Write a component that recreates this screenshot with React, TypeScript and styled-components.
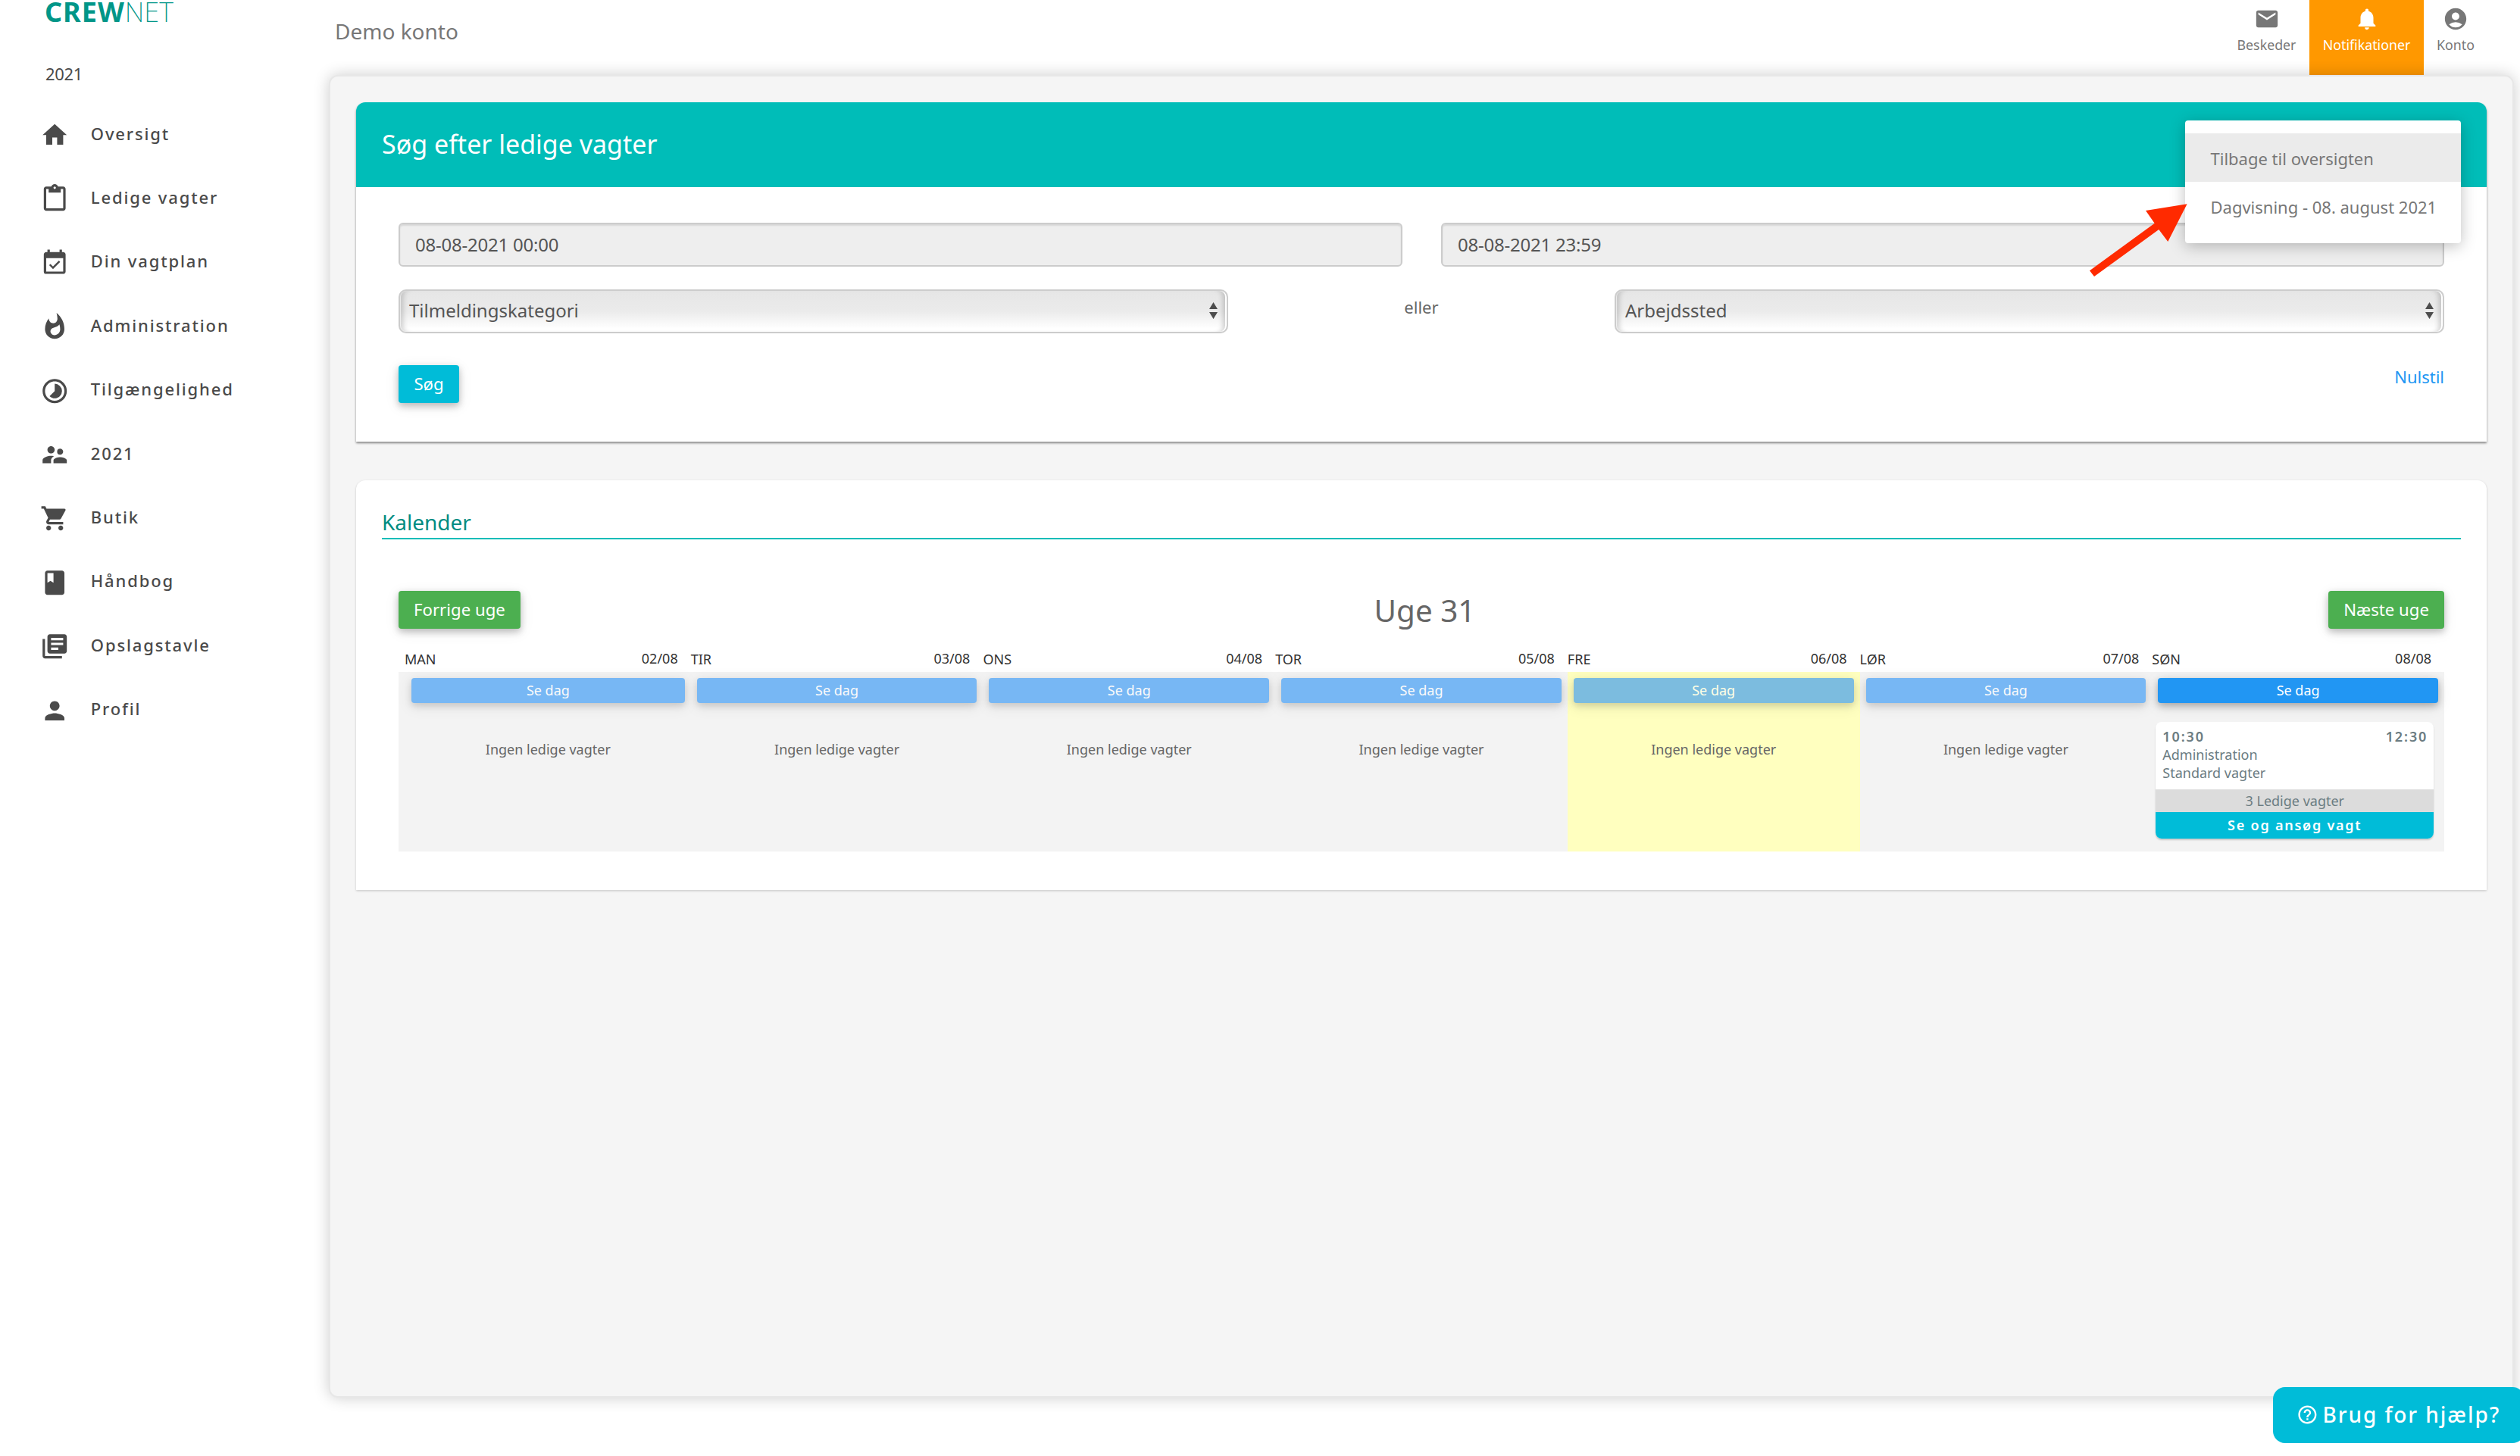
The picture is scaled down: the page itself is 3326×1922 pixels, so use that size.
import React from "react";
import styled, { createGlobalStyle } from "styled-components";
import {
  MdAccountCircle,
  MdBook,
  MdContentPaste,
  MdEmail,
  MdEventAvailable,
  MdHelpOutline,
  MdHome,
  MdLibraryBooks,
  MdNotifications,
  MdPerson,
  MdShoppingCart,
  MdSupervisorAccount,
  MdTimelapse,
  MdWhatshot,
} from "react-icons/md";

const GlobalStyle = createGlobalStyle`
  *, *::before, *::after { box-sizing: border-box; }
  html, body { margin: 0; background: #fff; overflow: hidden; }
  body { font-family: "Noto Sans", "Open Sans", sans-serif; font-size: 22px; color: #666; }
  button { font-family: inherit; border: 0; cursor: pointer; }
`;

const Page = styled.div`
  display: flex;
  width: 3326px;
  height: 1922px;
  position: relative;
  overflow: hidden;
`;

/* Sidebar */
const Sidebar = styled.nav`
  width: 434px;
  flex: none;
  display: flex;
  flex-direction: column;
`;

const Logo = styled.div`
  height: 46px;
  padding-left: 59px;
  font-size: 36px;
  line-height: 32px;
  color: #009688;
  white-space: nowrap;
`;

const LogoStrong = styled.span`
  font-weight: 700;
  letter-spacing: 1px;
`;

const LogoThin = styled.span`
  font-weight: 200;
  letter-spacing: 0;
`;

const Season = styled.div`
  margin-top: 35px;
  padding-left: 60px;
  font-size: 22px;
  letter-spacing: -0.3px;
  line-height: 32px;
  color: #4a4a4a;
`;

const Menu = styled.ul`
  list-style: none;
  margin: 23px 0 0;
  padding: 0;
`;

const MenuItem = styled.li`
  display: flex;
  align-items: center;
  height: 84.4px;
  padding-left: 52.8px;
  gap: 28.6px;
  color: #4a4a4a;
  font-weight: 500;
  letter-spacing: 1.86px;
  font-size: 22px;
  line-height: 30px;

  svg {
    width: 38.4px;
    height: 38.4px;
    flex: none;
  }
  span {
    padding-bottom: 5px;
  }
`;

/* Top bar */
const Main = styled.div`
  flex: 1;
  display: flex;
  flex-direction: column;
  padding-right: 8px;
`;

const TopBar = styled.header`
  height: 99px;
  display: flex;
  justify-content: space-between;
  padding: 0 35px 0 8px;
  color: #777;
`;

const Account = styled.div`
  font-size: 28px;
  line-height: 82px;
`;

const TopActions = styled.div`
  display: flex;
`;

const TopAction = styled.a<{ $active?: boolean; $width: number }>`
  width: ${(p) => p.$width}px;
  height: 99px;
  display: flex;
  flex-direction: column;
  align-items: center;
  padding-top: 8px;
  font-size: 17.8px;
  line-height: 24px;
  gap: 5px;
  color: ${(p) => (p.$active ? "#fff" : "#777")};
  background: ${(p) => (p.$active ? "#ff9800" : "transparent")};

  svg {
    width: 34px;
    height: 34px;
  }
`;

/* Content */
const Panel = styled.main`
  height: 1746px;
  border: 2px solid #e7e7e7;
  border-radius: 12px;
  background: #f5f5f5;
  background-clip: padding-box;
  box-shadow: 0 0 20px rgba(0, 0, 0, 0.2);
  padding: 34px;
  position: relative;
`;

const Card = styled.section<{ $height: number; $shadow: string }>`
  height: ${(p) => p.$height}px;
  background: #fff;
  border-radius: 12px 12px 0 0;
  box-shadow: ${(p) => p.$shadow};
  margin-bottom: 51px;
  position: relative;
`;

const CardHeader = styled.div`
  height: 112px;
  border-radius: 12px 12px 0 0;
  background: #00bdb8;
  color: #fff;
  padding-left: 34px;
  font-size: 34px;
  line-height: 110px;
`;

const Form = styled.div`
  padding: 47px 56px 0;
`;

const DateRow = styled.div`
  display: grid;
  grid-template-columns: 1325px 1324px;
  justify-content: space-between;
`;

const DateInput = styled.div`
  height: 58px;
  border: 2px solid #ccc;
  border-radius: 6px;
  background: #eee;
  box-shadow: inset 0 2px 2px rgba(0, 0, 0, 0.1);
  padding-left: 20px;
  font-size: 24px;
  letter-spacing: -0.23px;
  line-height: 53px;
  color: #555;
`;

const SelectRow = styled.div`
  display: grid;
  grid-template-columns: 1095px 1fr 1095px;
  margin-top: 30px;
`;

const Select = styled.div`
  height: 58px;
  border: 2px solid #ccc;
  border-radius: 10px;
  background: linear-gradient(#e6e6e6, #ebebeb 50%, #fff 92%);
  box-shadow: inset 1px 0 1px rgba(255, 255, 255, 0.7), inset -2px 0 0 #fff,
    inset 9px 0 7px -5px rgba(0, 0, 0, 0.18), inset -10px 0 7px -5px rgba(0, 0, 0, 0.18);
  padding: 0 12px 2px;
  display: flex;
  align-items: center;
  justify-content: space-between;
  font-size: 24px;
  line-height: 52px;
  color: #555;

  svg {
    width: 11px;
    height: 22px;
  }
`;

const Or = styled.div`
  text-align: center;
  line-height: 47px;
  font-size: 22px;
`;

const FormActions = styled.div`
  display: flex;
  justify-content: space-between;
  align-items: flex-start;
  margin-top: 42px;
`;

const Button = styled.button<{ $color: string }>`
  height: 50px;
  min-width: 80px;
  padding: 0 20px;
  border-radius: 4px;
  background: ${(p) => p.$color};
  color: #fff;
  font-size: 22.2px;
  line-height: 50px;
  box-shadow: 0 4px 10px rgba(0, 0, 0, 0.24), 0 4px 20px rgba(0, 0, 0, 0.08);
`;

const ResetLink = styled.a`
  color: #2196f3;
  font-size: 22px;
  line-height: 30px;
`;

/* Calendar */
const CalendarHeading = styled.h2`
  margin: 0 34px;
  padding-top: 34px;
  height: 78px;
  border-bottom: 2px solid #00bdb8;
  font-size: 28px;
  font-weight: 400;
  line-height: 42px;
  color: #008c82;
`;

const Calendar = styled.div`
  padding: 68px 56px 0;
`;

const WeekNav = styled.div`
  display: grid;
  grid-template-columns: 1fr auto 1fr;
  height: 50px;
`;

const NavSlot = styled.div<{ $end?: boolean }>`
  display: flex;
  justify-content: ${(p) => (p.$end ? "flex-end" : "flex-start")};
`;

const WeekTitle = styled.div`
  padding-left: 9px;
  font-size: 40.4px;
  line-height: 52px;
  color: #666;
`;

const Week = styled.div`
  display: grid;
  grid-template-columns: repeat(7, 1fr);
  margin-top: 27px;
`;

const Day = styled.div`
  display: flex;
  flex-direction: column;
`;

const DayLabel = styled.div<{ $first?: boolean }>`
  display: flex;
  justify-content: space-between;
  height: 30px;
  padding: 0 17px 0 ${(p) => (p.$first ? 8 : 0)}px;
  font-size: 18px;
  line-height: 26px;
  color: #333;
`;

const DayDate = styled.span`
  line-height: 24px;
`;

const DayBody = styled.div<{ $first?: boolean; $today?: boolean }>`
  height: 237px;
  padding: 8px 8px 0 ${(p) => (p.$first ? 17 : 8)}px;
  background: ${(p) => (p.$today ? "#ffffbf" : "#f3f3f3")};
`;

const DayButton = styled.button<{ $muted?: boolean }>`
  display: block;
  width: 100%;
  height: 33px;
  padding: 0;
  border-radius: 4px;
  background: ${(p) => (p.$muted ? "#2690f5" : "#2196f3")};
  color: #fff;
  font-size: 18px;
  line-height: 33px;
  opacity: ${(p) => (p.$muted ? 0.6 : 1)};
  box-shadow: 0 4px 10px rgba(0, 0, 0, 0.26), 0 4px 20px rgba(0, 0, 0, 0.1);
`;

const Empty = styled.div`
  margin-top: 46px;
  text-align: center;
  font-size: 18px;
  line-height: 31px;
  color: #666;
`;

const Shift = styled.article`
  width: 367px;
  margin: 25px 0 0 -3px;
  border-radius: 8px;
  overflow: hidden;
  background: #fff;
  box-shadow: 0 2px 2px rgba(0, 0, 0, 0.18);
  font-size: 18px;
  color: #6b7c82;
`;

const ShiftInfo = styled.div`
  height: 89px;
  padding: 7px 8px 0 9px;
  line-height: 24px;
`;

const ShiftTime = styled.div`
  display: flex;
  justify-content: space-between;
  font-weight: 600;
  letter-spacing: 1.9px;
`;

const ShiftCount = styled.div`
  height: 30px;
  line-height: 30px;
  text-align: center;
  background: #dcdcdc;
`;

const ShiftApply = styled.div`
  height: 35px;
  line-height: 34px;
  text-align: center;
  font-weight: 600;
  letter-spacing: 1.77px;
  color: #fff;
  background: #00bcd8;
`;

/* Overlays */
const Dropdown = styled.div`
  position: absolute;
  left: 2884px;
  top: 159px;
  width: 364px;
  height: 162px;
  padding-top: 17px;
  border-radius: 4px;
  background: #fff;
  box-shadow: 0 4px 20px rgba(0, 0, 0, 0.25);
`;

const DropdownItem = styled.div<{ $hover?: boolean }>`
  height: 64px;
  padding-left: 33.5px;
  line-height: 67px;
  font-size: 22px;
  color: #777;
  white-space: nowrap;
  background: ${(p) => (p.$hover ? "#ebebeb" : "transparent")};
`;

const Pointer = styled.svg`
  position: absolute;
  left: 2750px;
  top: 260px;
`;

const Help = styled.div`
  position: absolute;
  left: 3000px;
  top: 1831px;
  width: 332px;
  height: 74px;
  padding: 0 0 2px 30.6px;
  border-radius: 16px;
  background: #00bcd8;
  color: #fff;
  display: flex;
  align-items: center;
  gap: 6px;
  font-size: 28px;
  font-weight: 500;
  line-height: 72px;
  letter-spacing: 1.93px;
  white-space: nowrap;

  svg {
    width: 28.8px;
    height: 28.8px;
    flex: none;
  }
`;

const menu = [
  { icon: <MdHome />, label: "Oversigt" },
  { icon: <MdContentPaste />, label: "Ledige vagter" },
  { icon: <MdEventAvailable />, label: "Din vagtplan" },
  { icon: <MdWhatshot />, label: "Administration" },
  { icon: <MdTimelapse />, label: "Tilgængelighed" },
  { icon: <MdSupervisorAccount />, label: "2021" },
  { icon: <MdShoppingCart />, label: "Butik" },
  { icon: <MdBook />, label: "Håndbog" },
  { icon: <MdLibraryBooks />, label: "Opslagstavle" },
  { icon: <MdPerson />, label: "Profil" },
];

const days = [
  { name: "MAN", date: "02/08" },
  { name: "TIR", date: "03/08" },
  { name: "ONS", date: "04/08" },
  { name: "TOR", date: "05/08" },
  { name: "FRE", date: "06/08", today: true },
  { name: "LØR", date: "07/08" },
  { name: "SØN", date: "08/08", shift: true },
];

const SelectArrows = () => (
  <svg viewBox="0 0 11 22" fill="#4d4d4d">
    <path d="M5.5 0L11 9H0zM0 13h11l-5.5 9z" />
  </svg>
);

export default function App() {
  return (
    <>
      <GlobalStyle />
      <Page>
        <Sidebar>
          <Logo>
            <LogoStrong>CREW</LogoStrong>
            <LogoThin>NET</LogoThin>
          </Logo>
          <Season>2021</Season>
          <Menu>
            {menu.map((m) => (
              <MenuItem key={m.label}>
                {m.icon}
                <span>{m.label}</span>
              </MenuItem>
            ))}
          </Menu>
        </Sidebar>

        <Main>
          <TopBar>
            <Account>Demo konto</Account>
            <TopActions>
              <TopAction $width={113}>
                <MdEmail />
                Beskeder
              </TopAction>
              <TopAction $width={151} $active>
                <MdNotifications />
                Notifikationer
              </TopAction>
              <TopAction $width={84}>
                <MdAccountCircle />
                Konto
              </TopAction>
            </TopActions>
          </TopBar>

          <Panel>
            <Card $height={448} $shadow="0 2px 3px rgba(0,0,0,.45)">
              <CardHeader>Søg efter ledige vagter</CardHeader>
              <Form>
                <DateRow>
                  <DateInput>08-08-2021 00:00</DateInput>
                  <DateInput>08-08-2021 23:59</DateInput>
                </DateRow>
                <SelectRow>
                  <Select>
                    Tilmeldingskategori
                    <SelectArrows />
                  </Select>
                  <Or>eller</Or>
                  <Select>
                    Arbejdssted
                    <SelectArrows />
                  </Select>
                </SelectRow>
                <FormActions>
                  <Button $color="#00bcd8">Søg</Button>
                  <ResetLink>Nulstil</ResetLink>
                </FormActions>
              </Form>
            </Card>

            <Card $height={541} $shadow="0 1px 3px rgba(0,0,0,.2)">
              <CalendarHeading>Kalender</CalendarHeading>
              <Calendar>
                <WeekNav>
                  <NavSlot>
                    <Button $color="#4caf50">Forrige uge</Button>
                  </NavSlot>
                  <WeekTitle>Uge 31</WeekTitle>
                  <NavSlot $end>
                    <Button $color="#4caf50">Næste uge</Button>
                  </NavSlot>
                </WeekNav>
                <Week>
                  {days.map((d, i) => (
                    <Day key={d.name}>
                      <DayLabel $first={i === 0}>
                        <span>{d.name}</span>
                        <DayDate>{d.date}</DayDate>
                      </DayLabel>
                      <DayBody $first={i === 0} $today={d.today}>
                        <DayButton $muted={!d.shift}>Se dag</DayButton>
                        {d.shift ? (
                          <Shift>
                            <ShiftInfo>
                              <ShiftTime>
                                <span>10:30</span>
                                <span>12:30</span>
                              </ShiftTime>
                              <div>Administration</div>
                              <div>Standard vagter</div>
                            </ShiftInfo>
                            <ShiftCount>3 Ledige vagter</ShiftCount>
                            <ShiftApply>Se og ansøg vagt</ShiftApply>
                          </Shift>
                        ) : (
                          <Empty>Ingen ledige vagter</Empty>
                        )}
                      </DayBody>
                    </Day>
                  ))}
                </Week>
              </Calendar>
            </Card>
          </Panel>
        </Main>

        <Dropdown>
          <DropdownItem $hover>Tilbage til oversigten</DropdownItem>
          <DropdownItem>Dagvisning - 08. august 2021</DropdownItem>
        </Dropdown>

        <Pointer width="150" height="120" viewBox="2750 260 150 120">
          <path
            d="M2758 357.3L2843.7 294.7L2832 278L2886.6 269.3L2861.3 319L2849.3 303L2764 365Z"
            fill="#ff2a00"
          />
        </Pointer>

        <Help>
          <MdHelpOutline />
          Brug for hjælp?
        </Help>
      </Page>
    </>
  );
}
